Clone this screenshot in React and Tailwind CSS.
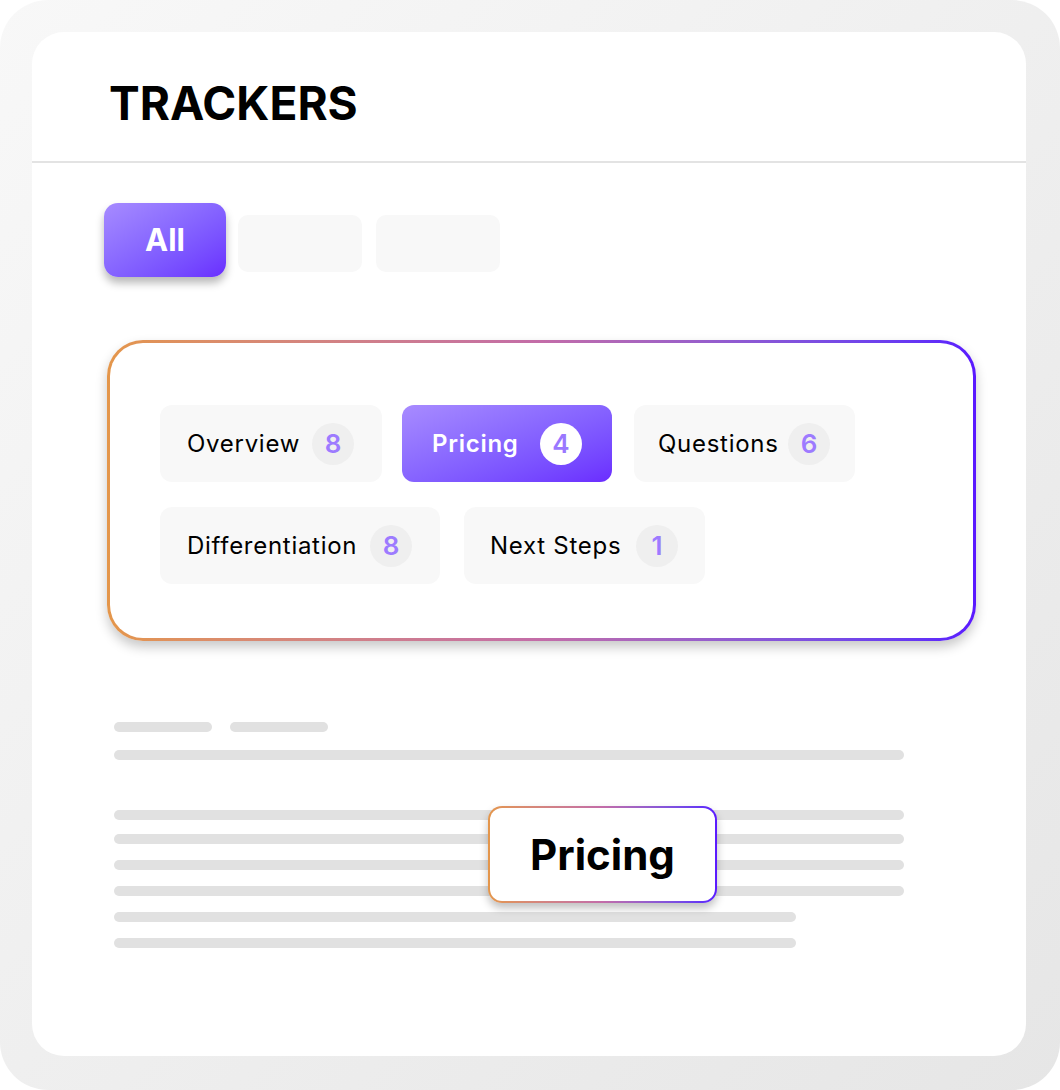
const chips = [
  [
    { label: 'Overview', count: 8, w: 'w-[222px]', pl: 'pl-[27px]', pr: 'pr-[28px]', ml: 'ml-0' },
    { label: 'Pricing', count: 4, active: true, w: 'w-[210px]', pl: 'pl-[30px]', pr: 'pr-[30px]', ml: 'ml-[20px]' },
    { label: 'Questions', count: 6, w: 'w-[221px]', pl: 'pl-[24px]', pr: 'pr-[25px]', ml: 'ml-[22px]' },
  ],
  [
    { label: 'Differentiation', count: 8, w: 'w-[280px]', pl: 'pl-[27px]', pr: 'pr-[28px]', ml: 'ml-0' },
    { label: 'Next Steps', count: 1, w: 'w-[241px]', pl: 'pl-[26px]', pr: 'pr-[27px]', ml: 'ml-[24px]' },
  ],
];

function Chip({ label, count, active, w, pl, pr, ml }) {
  return (
    <div
      className={`flex items-center h-[77px] rounded-[12px] ${w} ${pl} ${pr} ${ml} ${
        active ? 'bg-gradient-to-br from-[#a88bff] to-[#6b2bff]' : 'bg-[#f8f8f8]'
      }`}
    >
      <span
        className={`text-[24px] tracking-[0.03em] whitespace-nowrap ${
          active ? 'font-semibold text-white' : 'text-black'
        }`}
      >
        {label}
      </span>
      <span
        className={`ml-auto w-[42px] h-[42px] shrink-0 rounded-full flex items-center justify-center text-[26px] font-semibold ${
          active ? 'bg-white text-[#9a78ff]' : 'bg-[#efefef] text-[#9d7bff]'
        }`}
      >
        {count}
      </span>
    </div>
  );
}

function Bar({ w }) {
  return <div className={`h-[10px] rounded-full bg-[#e1e1e1] ${w}`} />;
}

export default function App() {
  return (
    <div className="w-[1060px] h-[1090px] pl-8 pt-8 pr-[34px] pb-[34px] rounded-[48px] bg-gradient-to-br from-[#f8f8f8] to-[#e6e6e6] font-['Inter',sans-serif]">
      <div className="h-full rounded-[32px] bg-white overflow-hidden">
        {/* Header */}
        <div className="h-[131px] border-b-2 border-[#e3e3e3] pl-[77px] flex items-center pt-[13px]">
          <h1 className="text-[46px] font-bold text-black">TRACKERS</h1>
        </div>

        <div className="pl-[72px] pt-[40px]">
          {/* Filter tabs */}
          <div className="flex items-start gap-3">
            <div className="w-[122px] h-[74px] rounded-[14px] bg-gradient-to-br from-[#a78bff] to-[#6a2cff] shadow-[0_6px_8px_rgba(0,0,0,0.28)] flex items-center justify-center text-[31px] font-bold text-white">
              All
            </div>
            <div className="mt-[12px] w-[124px] h-[57px] rounded-[10px] bg-[#f8f8f8]" />
            <div className="mt-[12px] ml-[2px] w-[124px] h-[57px] rounded-[10px] bg-[#f8f8f8]" />
          </div>

          {/* Tracker box */}
          <div className="mt-[63px] ml-[3px] w-[869px] rounded-[36px] p-[3px] bg-gradient-to-r from-[#e4964a] via-[#c36ca8] to-[#5a18ff] shadow-[0_6px_12px_rgba(0,0,0,0.22)]">
            <div className="rounded-[33px] bg-white pl-[50px] pt-[62px] pb-[54px] flex flex-col gap-[25px]">
              {chips.map((row, i) => (
                <div key={i} className="flex">
                  {row.map((c) => (
                    <Chip key={c.label} {...c} />
                  ))}
                </div>
              ))}
            </div>
          </div>

          {/* Transcript skeleton */}
          <div className="relative mt-[81px] ml-[10px] w-[790px] flex flex-col">
            <div className="flex gap-[18px]">
              <Bar w="w-[98px]" />
              <Bar w="w-[98px]" />
            </div>
            <div className="mt-[18px]"><Bar w="w-[790px]" /></div>
            <div className="mt-[50px] flex flex-col">
              <Bar w="w-[790px]" />
              <div className="mt-[14px]"><Bar w="w-[790px]" /></div>
              <div className="mt-[16px]"><Bar w="w-[790px]" /></div>
              <div className="mt-[16px]"><Bar w="w-[790px]" /></div>
              <div className="mt-[16px]"><Bar w="w-[682px]" /></div>
              <div className="mt-[16px]"><Bar w="w-[682px]" /></div>
            </div>

            <div className="absolute left-[374px] top-[84px] w-[229px] h-[97px] rounded-[14px] p-[2px] bg-gradient-to-r from-[#e4964a] via-[#c36ca8] to-[#5a18ff] shadow-[0_5px_8px_rgba(0,0,0,0.25)]">
              <div className="w-full h-full rounded-[12px] bg-white flex items-center justify-center text-[42px] font-bold text-black">
                Pricing
              </div>
            </div>
          </div>
        </div>
      </div>
    </div>
  );
}
